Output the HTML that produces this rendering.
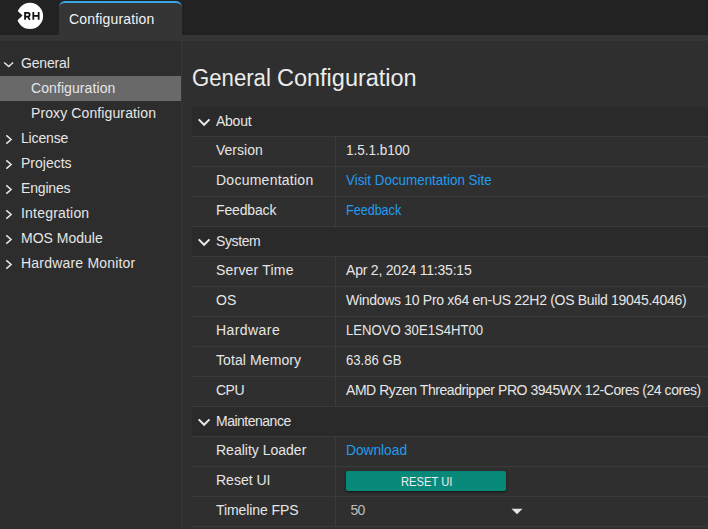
<!DOCTYPE html>
<html><head><meta charset="utf-8">
<style>
*{margin:0;padding:0;box-sizing:border-box}
html,body{width:708px;height:529px;overflow:hidden;background:#2f2f2f;font-family:"Liberation Sans",sans-serif;color:#e6e6e6;font-size:14px}
.abs{position:absolute}
#top{left:0;top:0;width:708px;height:35px;background:#222}
#tab{left:59px;top:1px;width:123px;height:34px;background:#353535;border-top:2px solid #38a6e2;border-radius:6px 6px 0 0}
#strip{left:0;top:35px;width:708px;height:6px;background:#353535}
#side{left:0;top:41px;width:181px;height:488px;background:#2d2d2d}
#sideb{left:181px;top:41px;width:1px;height:488px;background:#373737}
#hl{left:0;top:76px;width:181px;height:25px;background:#696969}
.t{position:absolute;white-space:nowrap;line-height:16px}
.row{position:absolute;left:192px;width:516px;height:30px;background:transparent}
.hdr{background:#2a2a2a}
.ln{position:absolute;left:192px;width:516px;height:1px;background:#3a3a3a}
.vl{position:absolute;left:335px;width:1px;height:29px;background:#3a3a3a}
</style></head><body>
<div class="abs" id="top"></div>
<svg class="abs" style="left:0;top:0" width="60" height="35" viewBox="0 0 60 35">
  <circle cx="30" cy="15.9" r="13.1" fill="#fff"/>
  <path d="M8 2.2 L22.6 15.6 L8 29 Z" fill="#222"/>
  <path d="M25.05 19.7 V12.85 H27.8 C29.1 12.85 29.7 13.7 29.7 14.72 C29.7 15.75 29.1 16.6 27.8 16.6 H25.05 M27.6 16.6 L29.9 19.7 M33.3 12 V19.7 M38.65 12 V19.7 M33.3 15.95 H38.65" fill="none" stroke="#111" stroke-width="1.75"/>
</svg>
<div class="abs" id="tab"></div>
<div class="abs" id="strip"></div>
<div class="abs" id="side"></div>
<div class="abs" id="sideb"></div>
<div class="abs" id="hl"></div>
<svg class="abs" style="left:0;top:50px" width="20" height="230" viewBox="0 50 20 230">
  <g fill="none" stroke="#e8e8e8" stroke-width="1.5">
    <path d="M4.2 62.5 L8.7 66.6 L13.1 62.5"/>
    <path d="M6.3 135.4 L11.1 139.5 L6.3 143.6"/>
    <path d="M6.3 160.4 L11.1 164.5 L6.3 168.6"/>
    <path d="M6.3 185.4 L11.1 189.5 L6.3 193.6"/>
    <path d="M6.3 210.4 L11.1 214.5 L6.3 218.6"/>
    <path d="M6.3 235.4 L11.1 239.5 L6.3 243.6"/>
    <path d="M6.3 260.4 L11.1 264.5 L6.3 268.6"/>
  </g>
</svg>
<div class="row hdr" style="top:107px;height:29px"></div>
<div class="row" style="top:137px;height:89px"></div>
<div class="row hdr" style="top:227px;height:29px"></div>
<div class="row" style="top:257px;height:149px"></div>
<div class="row hdr" style="top:407px;height:29px"></div>
<div class="row" style="top:437px;height:89px"></div>
<div class="ln" style="top:136px"></div>
<div class="ln" style="top:166px"></div>
<div class="ln" style="top:196px"></div>
<div class="ln" style="top:226px"></div>
<div class="ln" style="top:256px"></div>
<div class="ln" style="top:286px"></div>
<div class="ln" style="top:316px"></div>
<div class="ln" style="top:346px"></div>
<div class="ln" style="top:376px"></div>
<div class="ln" style="top:406px"></div>
<div class="ln" style="top:436px"></div>
<div class="ln" style="top:466px"></div>
<div class="ln" style="top:496px"></div>
<div class="ln" style="top:526px"></div>
<div class="vl" style="top:137px"></div>
<div class="vl" style="top:167px"></div>
<div class="vl" style="top:197px"></div>
<div class="vl" style="top:257px"></div>
<div class="vl" style="top:287px"></div>
<div class="vl" style="top:317px"></div>
<div class="vl" style="top:347px"></div>
<div class="vl" style="top:377px"></div>
<div class="vl" style="top:437px"></div>
<div class="vl" style="top:467px"></div>
<div class="vl" style="top:497px"></div>
<svg class="abs" style="left:190px;top:100px" width="30" height="340" viewBox="190 100 30 340">
  <g fill="none" stroke="#e8e8e8" stroke-width="2">
    <path d="M198.7 119.4 L204.1 124.8 L209.5 119.4"/>
    <path d="M198.7 239.4 L204.1 244.8 L209.5 239.4"/>
    <path d="M198.7 419.4 L204.1 424.8 L209.5 419.4"/>
  </g>
</svg>
<div class="abs" style="left:346px;top:471px;width:160px;height:20px;background:#08897a;border-radius:2px;box-shadow:0 1px 2px rgba(0,0,0,.6)"></div>
<svg class="abs" style="left:510px;top:506px" width="14" height="10" viewBox="510 506 14 10">
  <path d="M511.5 508.8 L522.5 508.8 L517 514.3 Z" fill="#e4e4e4"/>
</svg>

<div class="t" id="tabtxt" style="left:69px;top:11px;font-size:14px;letter-spacing:0.165px;color:#f2f2f2">Configuration</div>
<div class="t" id="s_general" style="left:21px;top:55px;font-size:14px;letter-spacing:-0.166px">General</div>
<div class="t" id="s_config" style="left:31px;top:80px;font-size:14px;letter-spacing:0.084px">Configuration</div>
<div class="t" id="s_proxy" style="left:31px;top:105px;font-size:14px;letter-spacing:0.111px">Proxy Configuration</div>
<div class="t" id="s_license" style="left:21px;top:130px;font-size:14px;letter-spacing:-0.164px">License</div>
<div class="t" id="s_projects" style="left:21px;top:155px;font-size:14px;letter-spacing:0.001px">Projects</div>
<div class="t" id="s_engines" style="left:21px;top:180px;font-size:14px;letter-spacing:-0.169px">Engines</div>
<div class="t" id="s_integration" style="left:21px;top:205px;font-size:14px;letter-spacing:0.200px">Integration</div>
<div class="t" id="s_mos" style="left:21px;top:230px;font-size:14px;letter-spacing:0.000px">MOS Module</div>
<div class="t" id="s_hw" style="left:21px;top:255px;font-size:14px;letter-spacing:0.200px">Hardware Monitor</div>
<div class="t" id="heading" style="left:192.3px;top:65px;font-size:23px;letter-spacing:0.000px;color:#ececec;line-height:26px;transform:scaleX(0.9637);transform-origin:0 0">General</div>
<div class="t" id="heading2" style="left:276.8px;top:65px;font-size:23px;letter-spacing:0.000px;color:#ececec;line-height:26px;transform:scaleX(1.0210);transform-origin:0 0">Configuration</div>
<div class="t" id="l_about" style="left:216px;top:113px;font-size:14px;letter-spacing:-0.250px">About</div>
<div class="t" id="l_version" style="left:216px;top:142px;font-size:14px;letter-spacing:0.003px">Version</div>
<div class="t" id="l_doc" style="left:216px;top:172px;font-size:14px;letter-spacing:0.252px">Documentation</div>
<div class="t" id="l_feedback" style="left:216px;top:202px;font-size:14px;letter-spacing:-0.144px">Feedback</div>
<div class="t" id="l_system" style="left:216px;top:233px;font-size:14px;letter-spacing:-0.400px">System</div>
<div class="t" id="l_stime" style="left:216px;top:262px;font-size:14px;letter-spacing:0.200px">Server Time</div>
<div class="t" id="l_os" style="left:216px;top:292px;font-size:14px;letter-spacing:0.000px">OS</div>
<div class="t" id="l_hw" style="left:216px;top:322px;font-size:14px;letter-spacing:0.431px">Hardware</div>
<div class="t" id="l_mem" style="left:216px;top:352px;font-size:14px;letter-spacing:0.091px">Total Memory</div>
<div class="t" id="l_cpu" style="left:216px;top:382px;font-size:14px;letter-spacing:-0.500px">CPU</div>
<div class="t" id="l_maint" style="left:216px;top:413px;font-size:14px;letter-spacing:-0.500px">Maintenance</div>
<div class="t" id="l_rl" style="left:216px;top:442px;font-size:14px;letter-spacing:0.003px">Reality Loader</div>
<div class="t" id="l_reset" style="left:216px;top:472px;font-size:14px;letter-spacing:-0.003px">Reset UI</div>
<div class="t" id="l_fps" style="left:216px;top:502px;font-size:14px;letter-spacing:-0.087px">Timeline FPS</div>
<div class="t" id="v_ver" style="left:346px;top:142px;font-size:14px;letter-spacing:0.000px;transform:scaleX(0.9642);transform-origin:0 0">1.5.1.b100</div>
<div class="t" id="v_doc" style="left:346px;top:172px;font-size:14px;letter-spacing:0.000px;color:#229cf0;transform:scaleX(0.9564);transform-origin:0 0">Visit Documentation Site</div>
<div class="t" id="v_fb" style="left:346px;top:202px;font-size:14px;letter-spacing:0.000px;color:#229cf0;transform:scaleX(0.8971);transform-origin:0 0">Feedback</div>
<div class="t" id="v_time" style="left:346px;top:262px;font-size:14px;letter-spacing:-0.212px">Apr 2, 2024 11:35:15</div>
<div class="t" id="v_os" style="left:346px;top:292px;font-size:14px;letter-spacing:-0.300px">Windows 10 Pro x64 en-US 22H2 (OS Build 19045.4046)</div>
<div class="t" id="v_hw" style="left:346px;top:322px;font-size:14px;letter-spacing:0.000px;transform:scaleX(0.9371);transform-origin:0 0">LENOVO 30E1S4HT00</div>
<div class="t" id="v_mem" style="left:346px;top:352px;font-size:14px;letter-spacing:0.000px;transform:scaleX(0.9370);transform-origin:0 0">63.86 GB</div>
<div class="t" id="v_cpu" style="left:346px;top:382px;font-size:14px;letter-spacing:-0.450px">AMD Ryzen Threadripper PRO 3945WX 12-Cores (24 cores)</div>
<div class="t" id="v_dl" style="left:346px;top:442px;font-size:14px;letter-spacing:0.000px;color:#229cf0;transform:scaleX(0.9798);transform-origin:0 0">Download</div>
<div class="t" id="btn" style="left:401px;top:473.5px;font-size:13px;letter-spacing:0.000px;color:#eeeeee;transform:scaleX(0.8608);transform-origin:0 0">RESET UI</div>
<div class="t" id="v_fps" style="left:350.4px;top:502px;font-size:14px;letter-spacing:-0.600px;color:#bdbdbd">50</div>

</body></html>
